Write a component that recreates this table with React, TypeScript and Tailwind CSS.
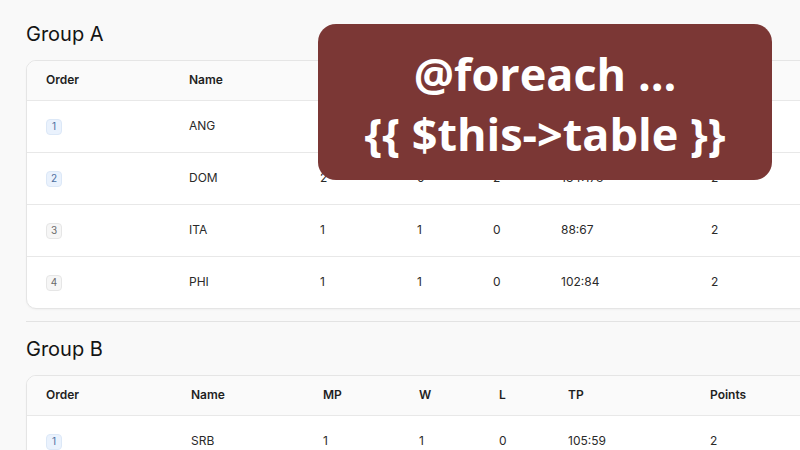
type Row = { order: number; name: string; mp: number; w: number; l: number; tp: string; pts: number };

const groupA: Row[] = [
  { order: 1, name: "ANG", mp: 2, w: 1, l: 1, tp: "150:140", pts: 3 },
  { order: 2, name: "DOM", mp: 2, w: 0, l: 2, tp: "134:178", pts: 2 },
  { order: 3, name: "ITA", mp: 1, w: 1, l: 0, tp: "88:67", pts: 2 },
  { order: 4, name: "PHI", mp: 1, w: 1, l: 0, tp: "102:84", pts: 2 },
];

const groupB: Row[] = [{ order: 1, name: "SRB", mp: 1, w: 1, l: 0, tp: "105:59", pts: 2 }];

function Badge({ n }: { n: number }) {
  const top = n <= 2;
  return (
    <span
      className={
        top
          ? "inline-flex h-4 w-4 items-center justify-center rounded-[4px] border border-[#dce8f7] bg-[#eaf2fd] text-[10px] text-[#4d6f9e]"
          : "inline-flex h-4 w-4 items-center justify-center rounded-[4px] border border-[#e6e6e6] bg-[#f6f6f6] text-[10px] text-[#6b6b6b]"
      }
    >
      {n}
    </span>
  );
}

function StandingsTable({ rows, cols }: { rows: Row[]; cols: string[] }) {
  const heads = ["Order", "Name", "MP", "W", "L", "TP", "Points"];
  return (
    <div className="w-[820px] overflow-hidden rounded-[10px] border border-[#e5e5e5] bg-white shadow-[0_1px_2px_rgba(0,0,0,0.04)]">
      <table className="w-full table-fixed border-collapse text-left">
        <colgroup>
          {cols.map((c, i) => (
            <col key={i} className={c} />
          ))}
          <col />
        </colgroup>
        <thead>
          <tr className="h-[39px] bg-[#fafafa]">
            {heads.map((h) => (
              <th key={h} className="pl-[19px] text-[12px] font-semibold text-[#1f1f1f]">
                {h}
              </th>
            ))}
          </tr>
        </thead>
        <tbody className="text-[12px] text-[#2a2a2a]">
          {rows.map((r) => (
            <tr key={r.order} className="h-[52px] border-t border-[#e8e8e8]">
              <td className="pl-[19px]">
                <Badge n={r.order} />
              </td>
              <td className="pl-[19px]">{r.name}</td>
              <td className="pl-[19px]">{r.mp}</td>
              <td className="pl-[19px]">{r.w}</td>
              <td className="pl-[19px]">{r.l}</td>
              <td className="pl-[19px]">{r.tp}</td>
              <td className="pl-[19px]">{r.pts}</td>
            </tr>
          ))}
        </tbody>
      </table>
    </div>
  );
}

export default function App() {
  return (
    <div className="relative h-[450px] w-[800px] overflow-hidden bg-[#f9f9f9] font-['Inter',sans-serif]">
      <div className="pl-[26px] pt-[22px]">
        <h2 className="text-[20px] leading-6 text-[#141414]">Group A</h2>
        <div className="mt-[14px]">
          <StandingsTable
            rows={groupA}
            cols={["w-[143px]", "w-[131px]", "w-[97px]", "w-[76px]", "w-[68px]", "w-[150px]"]}
          />
        </div>
        <div className="mt-[12px] h-px w-[800px] bg-[#e3e3e3]" />
        <h2 className="mt-[15px] text-[20px] leading-6 text-[#141414]">Group B</h2>
        <div className="mt-[14px]">
          <StandingsTable
            rows={groupB}
            cols={["w-[145px]", "w-[132px]", "w-[96px]", "w-[80px]", "w-[69px]", "w-[142px]"]}
          />
        </div>
      </div>

      {/* title card over the tables */}
      <div className="absolute left-[318px] top-[24px] flex h-[156px] w-[454px] flex-col items-center justify-center rounded-[18px] bg-[#7b3735] pt-1 font-['Open_Sans',sans-serif] text-[45px] font-bold leading-[60px] text-white">
        <div>@foreach ...</div>
        <div>{"{{ $this->table }}"}</div>
      </div>
    </div>
  );
}
